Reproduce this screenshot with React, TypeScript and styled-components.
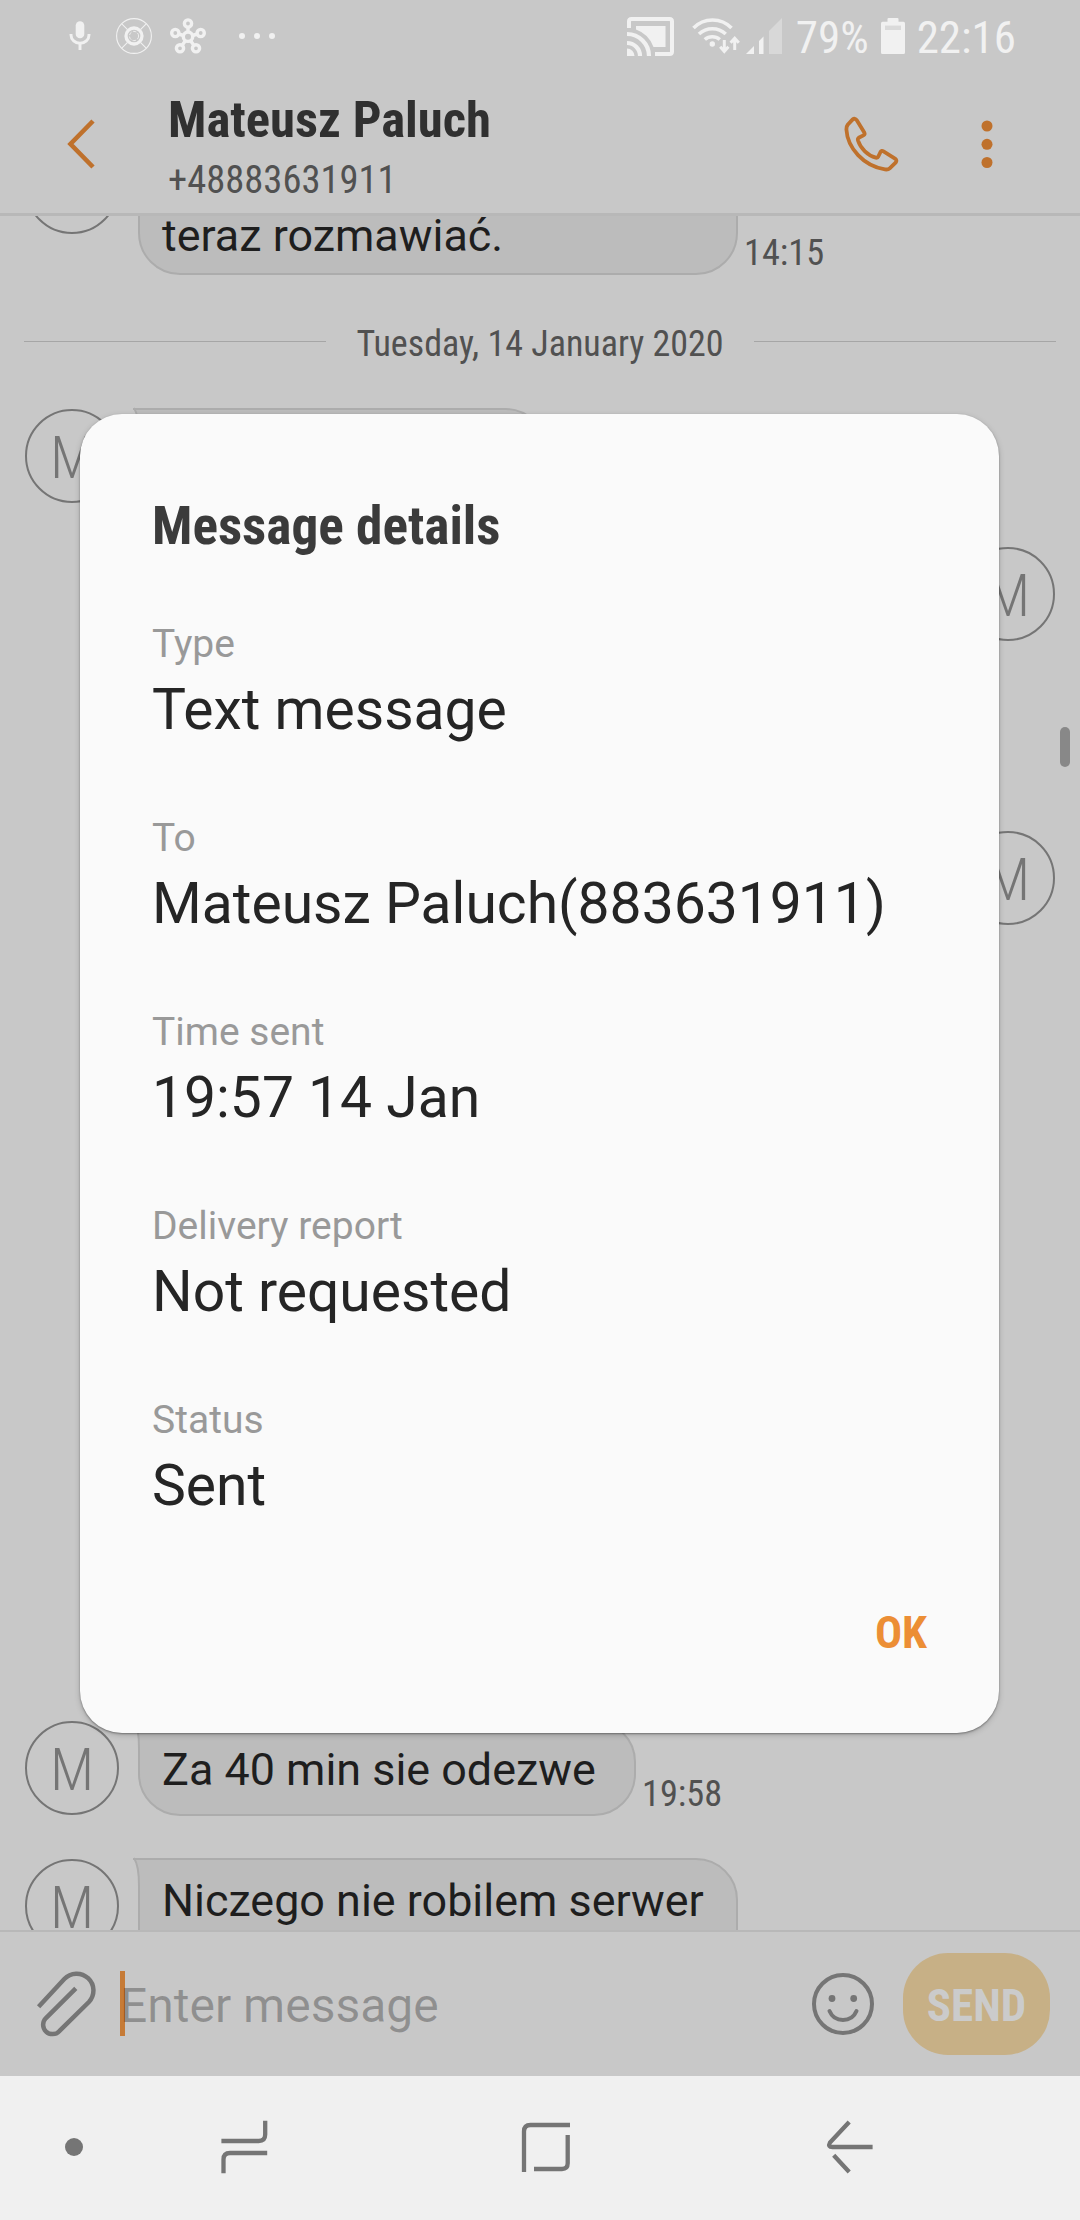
import React from "react";
import styled, { createGlobalStyle } from "styled-components";

const color = {
  page: "#c8c8c8",
  bubble: "#bcbcbc",
  bubbleEdge: "#acacac",
  line: "#b8b8b8",
  ink: "#1e1e1e",
  muted: "#515151",
  icon: "#757575",
  accent: "#bf712c",
  status: "#f1f1f1",
};

const condensed = `"Roboto Condensed", Roboto, sans-serif`;

const GlobalStyle = createGlobalStyle`
  body {
    margin: 0;
    background: ${color.page};
    font-family: Roboto, sans-serif;
  }
  * { box-sizing: border-box; }
`;

const Screen = styled.div`
  position: relative;
  display: flex;
  flex-direction: column;
  width: 1080px;
  height: 2220px;
  overflow: hidden;
  background: ${color.page};
`;

const Icon = styled.svg<{ $before?: number }>`
  display: block;
  flex: none;
  margin-left: ${(p) => p.$before ?? 0}px;
  fill: none;
  overflow: visible;
`;

/* ---------- status bar ---------- */

const StatusBar = styled.div`
  display: flex;
  justify-content: space-between;
  align-items: center;
  height: 72px;
  padding: 0 64px 0 69px;
  color: ${color.status};
`;

const StatusIcons = styled.div`
  display: flex;
  align-items: center;
`;

const StatusText = styled.span<{ $before: number; $after?: number }>`
  margin: 3px ${(p) => p.$after ?? 0}px 0 ${(p) => p.$before}px;
  font: 400 45px/54px ${condensed};
`;

/* ---------- app bar ---------- */

const AppBar = styled.header`
  display: flex;
  align-items: center;
  height: 144px;
  padding: 0 87px 0 66px;
  border-bottom: 3px solid ${color.line};
`;

const Contact = styled.div`
  flex: 1;
  padding: 7px 0 0 72px;
`;

const ContactName = styled.h1`
  margin: 0 0 7px;
  font: 700 50.700px/60px ${condensed};
  color: #303030;
`;

const ContactNumber = styled.div`
  font: 400 38.600px/46px ${condensed};
  color: ${color.muted};
`;

/* ---------- conversation ---------- */

const Conversation = styled.main`
  position: relative;
  flex: 1;
  min-height: 0;
  overflow: hidden;
`;

const MessageList = styled.div`
  display: flex;
  flex-direction: column;
  gap: 42px;
  margin-top: -77px;
`;

const MessageRow = styled.div<{ $own?: boolean; $height?: number }>`
  display: flex;
  flex-direction: ${(p) => (p.$own ? "row-reverse" : "row")};
  align-items: flex-start;
  flex: none;
  height: ${(p) => (p.$height ? `${p.$height}px` : "auto")};
  padding: 0 25px;
`;

const Avatar = styled.div`
  display: flex;
  justify-content: center;
  align-items: center;
  flex: none;
  width: 94px;
  height: 94px;
  margin-top: 1px;
  padding-top: 4px;
  border: 2px solid ${color.icon};
  border-radius: 50%;
  font: 300 59px/70px ${condensed};
  color: ${color.icon};
`;

type Align = "flex-start" | "center" | "flex-end";

const BubbleBox = styled.div<{ $width: number; $height: number; $align: Align }>`
  position: relative;
  display: flex;
  align-items: ${(p) => p.$align};
  width: ${(p) => p.$width}px;
  height: ${(p) => p.$height}px;
  margin-left: 19px;
  padding: 14px 20px 11px 22px;
  border: 2px solid ${color.bubbleEdge};
  border-radius: 0 42px 42px 42px;
  background: ${color.bubble};
`;

const BubbleText = styled.p`
  margin: 0;
  font-size: 44.900px;
  line-height: 53px;
  white-space: nowrap;
  color: ${color.ink};
`;

const Tail = styled(Icon)`
  position: absolute;
  top: -2px;
  left: -7px;
`;

const Time = styled.time`
  align-self: flex-end;
  margin-left: 6px;
  font: 400 36.300px/44px ${condensed};
  color: ${color.muted};
`;

const DateDivider = styled.div`
  display: flex;
  align-items: flex-start;
  height: 44px;
  margin-top: 5px;
  padding: 0 24px;
  gap: 30px;
  font: 400 36px/44px ${condensed};
  white-space: nowrap;
  color: ${color.muted};

  &::before,
  &::after {
    content: "";
    flex: 1;
    height: 1px;
    margin-top: 19px;
    background: #a6a6a6;
  }
`;

const ScrollThumb = styled.div`
  position: absolute;
  top: 511px;
  right: 10px;
  width: 10px;
  height: 40px;
  border-radius: 5px;
  background: #888;
`;

/* ---------- composer ---------- */

const Composer = styled.footer`
  display: flex;
  align-items: center;
  flex: none;
  height: 146px;
  padding: 0 30px 0 34px;
  border-top: 2px solid ${color.line};
`;

const InputField = styled.div`
  display: flex;
  align-items: center;
  flex: 1;
  margin: -1px 0 0 20px;
`;

const Caret = styled.span`
  width: 5px;
  height: 65px;
  background: #c67b37;
`;

const Placeholder = styled.span`
  margin: 4px 0 0 -5px;
  font-size: 48px;
  line-height: 56px;
  color: rgba(0, 0, 0, 0.28);
`;

const SendButton = styled.button`
  width: 147px;
  height: 102px;
  margin-left: 28px;
  padding: 4px 0 0;
  border: 0;
  border-radius: 45px;
  background: #c7b086;
  font: 700 45px/54px ${condensed};
  color: #cbcbcb;
`;

/* ---------- navigation bar ---------- */

const NavBar = styled.nav`
  display: flex;
  align-items: center;
  flex: none;
  height: 144px;
  padding: 0 0 2px 65px;
  background: #f0f0f0;
`;

/* ---------- dialog ---------- */

const Dialog = styled.section`
  position: absolute;
  top: 414px;
  left: 80px;
  display: flex;
  flex-direction: column;
  width: 919px;
  height: 1319px;
  padding: 80px 72px 0;
  border-radius: 42px;
  background: #fafafa;
  box-shadow: 0 1px 2px rgba(0, 0, 0, 0.35), 0 2px 6px rgba(0, 0, 0, 0.18);
`;

const DialogTitle = styled.h2`
  margin: 0 0 63px;
  font: 700 53.300px/64px ${condensed};
  color: #3b3b3b;
`;

const Details = styled.dl`
  display: flex;
  flex-direction: column;
  gap: 71px;
  margin: 0;
`;

const Label = styled.dt`
  margin-bottom: 9px;
  font-size: 39px;
  line-height: 46px;
  color: #999;
`;

const Value = styled.dd`
  margin: 0;
  font-size: 57px;
  line-height: 68px;
  white-space: nowrap;
  color: #252525;
`;

const OkButton = styled.button`
  align-self: flex-end;
  margin-top: 86px;
  padding: 0;
  border: 0;
  background: none;
  font: 700 45px/54px ${condensed};
  color: #ec8e35;
`;

function Bubble({
  text,
  width,
  height = 96,
  align = "center",
}: {
  text?: string;
  width: number;
  height?: number;
  align?: Align;
}) {
  return (
    <BubbleBox $width={width} $height={height} $align={align}>
      <Tail width="10" height="28" viewBox="0 0 10 28">
        <path d="M0 0H10V28H6C6 14 5 6 0 0Z" fill={color.bubble} />
        <path d="M0 1H10M1 0C5 6 6 14 6 28" stroke={color.bubbleEdge} strokeWidth="2" />
      </Tail>
      {text && <BubbleText>{text}</BubbleText>}
    </BubbleBox>
  );
}

function StatusBarView() {
  const c = color.status;
  return (
    <StatusBar>
      <StatusIcons>
        <Icon width="22" height="30" viewBox="0 0 22 30">
          <rect x="6.7" y="0.3" width="8.6" height="17" rx="4.3" fill={c} />
          <path d="M2 13v1a9 8.3 0 0 0 18 0v-1M11 22.500V29" stroke={c} strokeWidth="2.9" />
        </Icon>
        <Icon $before={25} width="36" height="36" viewBox="0 0 36 36">
          <circle cx="18" cy="18" r="17.4" stroke={c} strokeWidth="1.1" />
          <circle cx="18" cy="18" r="8" stroke={c} strokeWidth="3.3" />
          <circle cx="18" cy="18" r="4.600" stroke={c} strokeWidth="0.9" strokeDasharray="3.5 1.5" />
          <path d="M5.800 5.800l5.500 5.500M30.200 5.800l-5.500 5.500M5.800 30.200l5.500-5.500M30.200 30.200l-5.500-5.500" stroke={c} strokeWidth="1.100" />
        </Icon>
        <Icon $before={18} width="36" height="36" viewBox="0 0 36 36">
          <g stroke={c} strokeWidth="3.4">
            <circle cx="18" cy="18.700" r="4.700" />
            <circle cx="18" cy="5.500" r="3.600" />
            <circle cx="5.300" cy="15" r="3.600" />
            <circle cx="30.700" cy="15" r="3.600" />
            <circle cx="10" cy="30.300" r="3.600" />
            <circle cx="26" cy="30.300" r="3.600" />
            <path d="M18 9v5M8.500 16l5 1.500M27.500 16l-5 1.500M12 27.500l3.200-4.500M24 27.500l-3.200-4.500" />
          </g>
        </Icon>
        <Icon $before={33} width="36" height="6" viewBox="0 0 36 6">
          <circle cx="3" cy="3" r="3" fill={c} />
          <circle cx="18" cy="3" r="3" fill={c} />
          <circle cx="33" cy="3" r="3" fill={c} />
        </Icon>
      </StatusIcons>
      <StatusIcons>
        <Icon width="47" height="39" viewBox="0 0 47 39">
          <path d="M2 11V4.500Q2 2 4.500 2H42.500Q45 2 45 4.500V34.500Q45 37 42.500 37H28" stroke={c} strokeWidth="4" />
          <path d="M9 9H38.500V30H26.500A29 29 0 0 0 9 12.500Z" fill={c} />
          <path d="M0 31.500A7.500 7.500 0 0 1 7.500 39H0Z" fill={c} />
          <path d="M0 26A13 13 0 0 1 13 39M0 17A22 22 0 0 1 22 39" stroke={c} strokeWidth="4.200" />
        </Icon>
        <Icon $before={16} width="54" height="42" viewBox="0 0 54 42">
          <g stroke={c} strokeWidth="3.600">
            <path d="M3.500 13A26.500 26.500 0 0 1 41.500 13" />
            <path d="M9 19A19.500 19.500 0 0 1 35.700 19" />
            <path d="M14.800 24.500A11.500 11.500 0 0 1 29.800 24.500" />
          </g>
          <circle cx="22.300" cy="29" r="2.700" fill={c} />
          <path d="M34.300 25V36M30.200 31.800L34.300 36.400L38.400 31.800M44.700 35V24M40.600 27.700L44.700 23.200L48.800 27.700" stroke={c} strokeWidth="3" />
        </Icon>
        <Icon $before={2} width="36" height="36" viewBox="0 0 36 36">
          <path d="M0 36L8 28V36ZM13 36V23L17.500 18.500V36Z" fill={c} />
          <path d="M23 36V13L36 0V36Z" fill="#d8d8d8" />
        </Icon>
        <StatusText $before={14} $after={12}>79%</StatusText>
        <Icon width="24" height="36" viewBox="0 0 24 36">
          <path d="M6.500 3V1Q6.500 0 7.500 0H16.500Q17.500 0 17.500 1V3.800H22.500Q24 3.800 24 5.500V34.500Q24 36 22.500 36H1.500Q0 36 0 34.500V5.500Q0 3.800 1.500 3.800H6.500Z" fill={c} />
          <path d="M4 7.600H20V12H4Z" fill="#dadada" />
        </Icon>
        <StatusText $before={12}>22:16</StatusText>
      </StatusIcons>
    </StatusBar>
  );
}

const details: Array<[string, string]> = [
  ["Type", "Text message"],
  ["To", "Mateusz Paluch(883631911)"],
  ["Time sent", "19:57 14 Jan"],
  ["Delivery report", "Not requested"],
  ["Status", "Sent"],
];

export default function App() {
  return (
    <Screen>
      <GlobalStyle />
      <StatusBarView />

      <AppBar>
        <Icon width="30" height="52" viewBox="0 0 30 52">
          <path d="M27 4L4.500 27L27 50" stroke={color.accent} strokeWidth="4.600" />
        </Icon>
        <Contact>
          <ContactName>Mateusz Paluch</ContactName>
          <ContactNumber>+48883631911</ContactNumber>
        </Contact>
        <Icon width="60" height="60" viewBox="0 0 60 60">
          <path
            d="M11.500 6.600Q14 4.600 15.800 7.300L23.300 19.500Q24.200 21.300 22.400 22.300L17.700 24.800Q16.500 25.600 17 27.500C19.500 35.500 27 42.500 34.800 44.700Q36.700 45 37.300 43.500L39.500 39Q40.500 37.200 42.500 38.400L54 45.600Q56.500 47.500 54.600 49.700L48.700 55.300Q47 56.900 44 56.400C22.500 53 6.500 35 5.400 16.500Q5.300 13.500 6.700 11.800Z"
            stroke={color.accent}
            strokeWidth="3.800"
            strokeLinejoin="round"
          />
        </Icon>
        <Icon $before={80} width="12" height="48" viewBox="0 0 12 48">
          <g fill={color.accent}>
            <circle cx="6" cy="7" r="5.500" />
            <circle cx="6" cy="25.300" r="5.500" />
            <circle cx="6" cy="43.500" r="5.500" />
          </g>
        </Icon>
      </AppBar>

      <Conversation>
        <MessageList>
          <MessageRow>
            <Avatar>M</Avatar>
            <Bubble text="teraz rozmawiać." width={600} height={136} align="flex-end" />
            <Time>14:15</Time>
          </MessageRow>
          <DateDivider>Tuesday, 14 January 2020</DateDivider>
          <MessageRow>
            <Avatar>M</Avatar>
            <Bubble width={409} />
          </MessageRow>
          <MessageRow $own $height={242}>
            <Avatar>M</Avatar>
          </MessageRow>
          <MessageRow $own $height={848}>
            <Avatar>M</Avatar>
          </MessageRow>
          <MessageRow>
            <Avatar>M</Avatar>
            <Bubble text="Za 40 min sie odezwe" width={498} />
            <Time>19:58</Time>
          </MessageRow>
          <MessageRow>
            <Avatar>M</Avatar>
            <Bubble text="Niczego nie robilem serwer" width={600} height={136} align="flex-start" />
          </MessageRow>
        </MessageList>
        <ScrollThumb />
      </Conversation>

      <Composer>
        <Icon width="66" height="72" viewBox="0 0 66 72">
          <path
            d="M4.600 38.700L30.300 11A16.800 16.800 0 0 1 54.900 34L25.300 63.200A9.300 9.300 0 0 1 11.700 50.300L41.800 20.300"
            stroke={color.icon}
            strokeWidth="4.500"
          />
        </Icon>
        <InputField>
          <Caret />
          <Placeholder>Enter message</Placeholder>
        </InputField>
        <Icon width="64" height="64" viewBox="0 0 64 64">
          <circle cx="32" cy="32" r="29" stroke={color.icon} strokeWidth="4" />
          <circle cx="21" cy="26.500" r="3.400" fill={color.icon} />
          <circle cx="42.700" cy="26.500" r="3.400" fill={color.icon} />
          <path d="M18.500 39C21 45 26 48 32 48S43 45 45.500 39" stroke={color.icon} strokeWidth="4" strokeLinecap="round" />
        </Icon>
        <SendButton>SEND</SendButton>
      </Composer>

      <NavBar>
        <Icon width="18" height="18" viewBox="0 0 18 18">
          <circle cx="9" cy="9" r="9" fill={color.icon} />
        </Icon>
        <Icon $before={137} width="48" height="54" viewBox="0 0 48 54">
          <path d="M45.200 0.700V14.500Q45.200 21 38.700 21H1.400M3.500 53.300V39.500Q3.500 33 10 33H47.200" stroke={color.icon} strokeWidth="4.300" />
        </Icon>
        <Icon $before={254} width="48" height="54" viewBox="0 0 48 54">
          <path d="M2 52V11.500Q2 5 8.500 5H48M12 49H40Q45.700 49 45.700 43.300V15" stroke={color.icon} strokeWidth="4.300" />
        </Icon>
        <Icon $before={256} width="48" height="54" viewBox="0 0 48 54">
          <path d="M23.200 2L4 22.500Q1.500 27 6.500 27H46.600M7.700 35.300L23.200 52" stroke={color.icon} strokeWidth="4.300" />
        </Icon>
      </NavBar>

      <Dialog role="dialog">
        <DialogTitle>Message details</DialogTitle>
        <Details>
          {details.map(([label, value]) => (
            <div key={label}>
              <Label>{label}</Label>
              <Value>{value}</Value>
            </div>
          ))}
        </Details>
        <OkButton>OK</OkButton>
      </Dialog>
    </Screen>
  );
}
